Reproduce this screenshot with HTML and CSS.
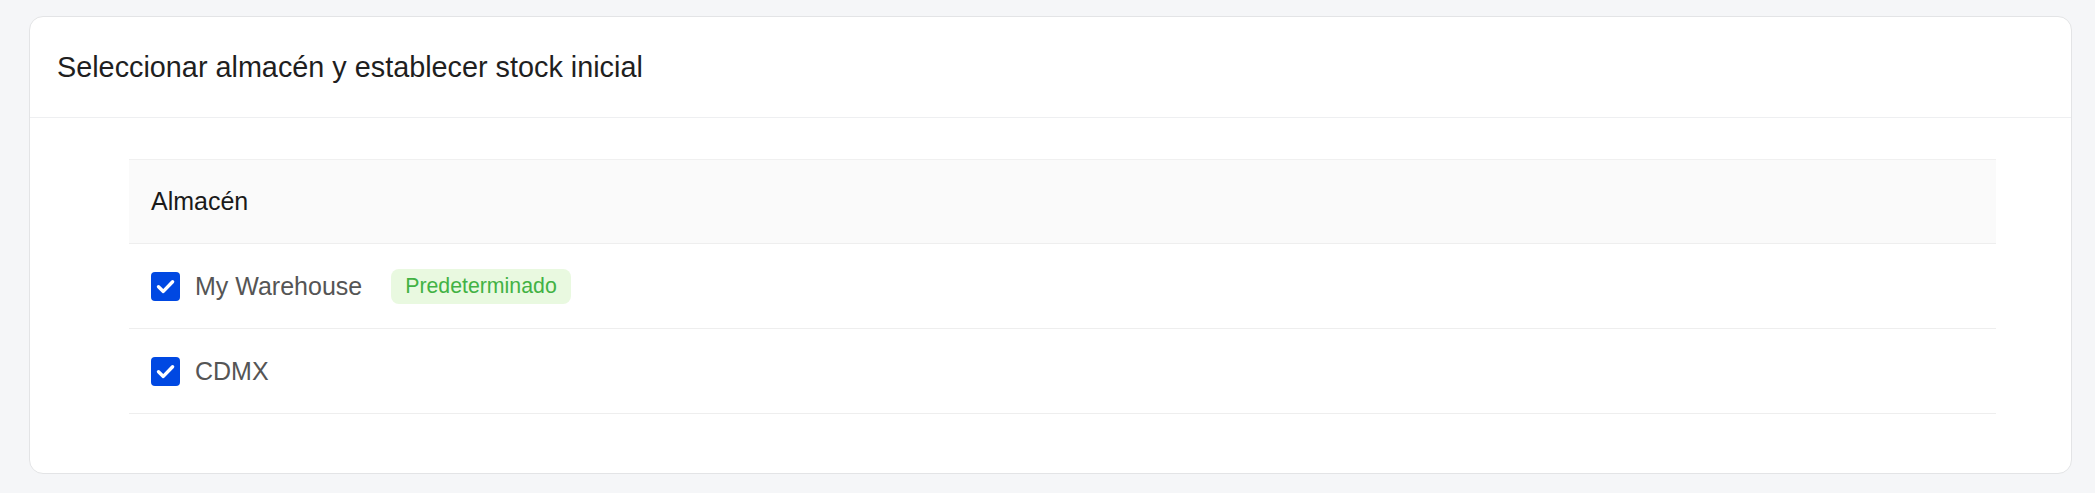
FILE: index.html
```html
<!DOCTYPE html>
<html lang="es">
<head>
<meta charset="utf-8">
<title>Almacén</title>
<link rel="stylesheet" href="styles.css">
</head>
<body>
<section class="card">
  <header class="card-header">
    <h2 class="card-title">Seleccionar almacén y establecer stock inicial</h2>
  </header>
  <div class="card-body">
    <div class="table">
      <div class="thead">
        <div class="cell">Almacén</div>
      </div>
      <div class="row">
        <div class="cell">
          <span class="checkbox"><svg class="check" viewBox="0 0 29 29"><path d="M7.5 14.8 L12.3 19.4 L21.6 9.8" fill="none" stroke="#fff" stroke-width="3.4" stroke-linecap="round" stroke-linejoin="round"/></svg></span>
          <span class="name">My Warehouse</span>
          <span class="badge">Predeterminado</span>
        </div>
      </div>
      <div class="row">
        <div class="cell">
          <span class="checkbox"><svg class="check" viewBox="0 0 29 29"><path d="M7.5 14.8 L12.3 19.4 L21.6 9.8" fill="none" stroke="#fff" stroke-width="3.4" stroke-linecap="round" stroke-linejoin="round"/></svg></span>
          <span class="name">CDMX</span>
        </div>
      </div>
    </div>
  </div>
</section>
</body>
</html>
```

FILE: styles.css
```css
* { box-sizing: border-box; }
html, body { margin: 0; padding: 0; }
body {
  background: #f5f6f8;
  font-family: "Liberation Sans", Arial, sans-serif;
  padding: 16px 23px 20px 29px;
}
.card {
  background: #fff;
  border: 1px solid #e3e4e6;
  border-radius: 14px;
  height: 458px;
}
.card-header {
  height: 101px;
  border-bottom: 1px solid #eeeff1;
  display: flex;
  align-items: center;
  padding-left: 27px;
}
.card-title {
  margin: 0;
  font-size: 28.8px;
  font-weight: 400;
  color: #1f1f1f;
  padding-top: 1px;
}
.card-body {
  padding: 41px 75px 0 99px;
}
.table { display: flex; flex-direction: column; }
.thead {
  height: 85px;
  background: #fafafa;
  border-top: 1px solid #f0f0f0;
  border-bottom: 1px solid #eeeeee;
  display: flex;
  align-items: center;
}
.thead .cell {
  font-size: 25px;
  color: #1a1a1a;
}
.cell {
  padding-left: 22px;
  display: flex;
  align-items: center;
}
.row {
  height: 85px;
  border-bottom: 1px solid #eeeeee;
  display: flex;
  align-items: center;
}
.checkbox {
  width: 29px;
  height: 29px;
  border-radius: 4px;
  background: #0048e2;
  display: inline-flex;
  margin-right: 15px;
}
.check {
  width: 29px;
  height: 29px;
  display: block;
}
.name {
  font-size: 25px;
  color: #555555;
}
.badge {
  margin-left: 29px;
  height: 35px;
  padding: 0 14px;
  border-radius: 8px;
  background: #e9f9e0;
  color: #42b244;
  font-size: 21.3px;
  display: inline-flex;
  align-items: center;
}
```
